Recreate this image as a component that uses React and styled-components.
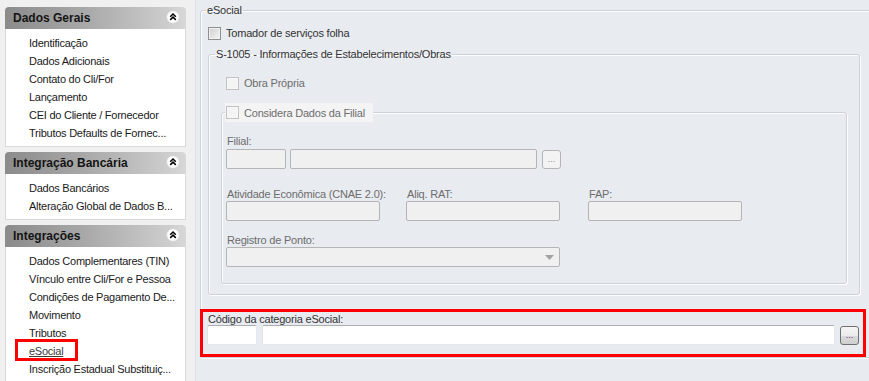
import React from "react";
import styled, { createGlobalStyle, css } from "styled-components";

const Global = createGlobalStyle`
  html, body { margin: 0; padding: 0; width: 869px; height: 381px; overflow: hidden; }
  body { font-family: "Liberation Sans", Arial, sans-serif; font-size: 11px; background: #e8ebf0; }
  #root { width: 869px; height: 381px; }
  *, *::before, *::after { box-sizing: border-box; }
`;

const Page = styled.div`
  display: flex;
  width: 869px;
  height: 381px;
  overflow: hidden;
  background: #e8ebf0;
`;

/* ---------- Sidebar ---------- */
const Sidebar = styled.aside`
  width: 196px;
  flex: none;
  background: #f0f0f0;
  border-right: 1px solid #dde0e5;
  padding: 7px 0 0 5px;
  display: flex;
  flex-direction: column;
  gap: 5px;
`;

const Panel = styled.section`
  width: 181px;
  flex: none;
`;

const PanelHeader = styled.div`
  height: 22px;
  display: flex;
  align-items: center;
  justify-content: space-between;
  padding: 0 6px 1px 8px;
  border-radius: 4px 4px 0 0;
  background: linear-gradient(to right, #8b8b8b 0%, #a9a9a9 45%, #cdcdcd 90%, #d8d8d8 100%);
  font-weight: bold;
  font-size: 12px;
  color: #141414;
  svg { margin-top: -2px; }
`;

const PanelBody = styled.div`
  background: #fff;
  border: 1px solid #d9d9d9;
  border-top: none;
  padding: 5px 0 4px 23px;
`;

const Item = styled.div`
  position: relative;
  height: 18px;
  line-height: 18px;
  color: #1a1a1a;
  white-space: nowrap;
  letter-spacing: -0.25px;
  ${(p) =>
    p.$active &&
    css`
      color: #3a3a3a;
      span { text-decoration: underline; }
      &::after {
        content: "";
        position: absolute;
        left: -14px;
        top: -3px;
        width: 63px;
        height: 22px;
        border: 3px solid #ff0000;
      }
    `}
`;

const Collapse = () => (
  <svg width="14" height="14" viewBox="0 0 14 14">
    <circle cx="7" cy="7" r="6.3" fill="#fff" stroke="#d4d4d4" strokeWidth="0.8" />
    <path
      d="M4.2 6.8 L7 4 L9.8 6.8 M4.2 9.9 L7 7.1 L9.8 9.9"
      stroke="#000"
      strokeWidth="1.5"
      fill="none"
    />
  </svg>
);

const SidePanel = ({ title, items, active }) => (
  <Panel>
    <PanelHeader>
      <span>{title}</span>
      <Collapse />
    </PanelHeader>
    <PanelBody>
      {items.map((it) => (
        <Item key={it} $active={it === active}>
          <span>{it}</span>
        </Item>
      ))}
    </PanelBody>
  </Panel>
);

/* ---------- Content ---------- */
const Content = styled.main`
  flex: 1;
  min-width: 0;
  overflow: hidden;
  padding: 3px 0 0 4px;
  letter-spacing: -0.2px;
`;

const GroupBox = styled.fieldset`
  margin: 0;
  min-width: 0;
  border: 1px solid #cdd2d9;
  border-radius: 3px;
  box-shadow: inset 1px 1px 0 #ffffff, 1px 1px 0 #ffffff;
  width: ${(p) => p.$width}px;
  padding: 0 0 ${(p) => p.$pb || 0}px ${(p) => p.$pl}px;
  margin-top: ${(p) => p.$mt || 0}px;
  margin-left: ${(p) => p.$ml || 0}px;
`;

const Legend = styled.legend`
  padding: 0 1px;
  margin-left: ${(p) => p.$ml}px;
  line-height: 14px;
  color: #333;
  ${(p) =>
    p.$boxed &&
    css`
      background: #f4f4f4;
      padding: 0 8px 0 1px;
      height: 19px;
      display: flex;
      align-items: center;
    `}
`;

const CheckRow = styled.label`
  display: flex;
  align-items: center;
  gap: 5px;
  height: 14px;
  margin-top: ${(p) => p.$mt || 0}px;
  margin-left: ${(p) => p.$ml || 0}px;
  color: ${(p) => (p.$disabled ? "#6d6d6d" : "#333")};
  white-space: nowrap;
`;

const Box = styled.span`
  width: 13px;
  height: 13px;
  flex: none;
  border: 1px solid ${(p) => (p.$disabled ? "#c2c2c2" : "#8e8f8f")};
  background: ${(p) =>
    p.$disabled ? "#f4f4f4" : "linear-gradient(135deg, #cdcdcd 0%, #e6e6e6 60%, #f7f7f7 100%)"};
  box-shadow: inset 0 0 0 1px ${(p) => (p.$disabled ? "#f7f7f7" : "#f1f1f1")};
`;

const Label = styled.div`
  height: ${(p) => p.$h || 14}px;
  line-height: 14px;
  margin-top: ${(p) => p.$mt || 0}px;
  color: ${(p) => (p.$disabled ? "#6d6d6d" : "#333")};
  padding-left: 1px;
  white-space: nowrap;
`;

const Row = styled.div`
  display: flex;
  align-items: center;
  gap: ${(p) => p.$gap || 5}px;
`;

const Input = styled.div`
  height: ${(p) => p.$h || 20}px;
  width: ${(p) => p.$w}px;
  flex: none;
  border-radius: 2px;
  ${(p) =>
    p.$enabled
      ? css`
          background: #fff;
          border: 1px solid;
          border-color: #abadb3 #e3e9ef #e3e9ef #e2e3ea;
        `
      : css`
          background: #f0f0f0;
          border: 1px solid #b4b4b4;
        `}
`;

const EllipsisButton = styled.div`
  width: 19px;
  height: 19px;
  flex: none;
  border-radius: 3px;
  display: flex;
  align-items: flex-end;
  justify-content: center;
  padding-bottom: 4px;
  font-size: 9px;
  line-height: 9px;
  letter-spacing: 0;
  ${(p) =>
    p.$enabled
      ? css`
          border: 1px solid #707070;
          background: linear-gradient(to bottom, #f4f4f4 0%, #ebebeb 50%, #dbdbdb 51%, #cfcfcf 100%);
          color: #5a2d8c;
        `
      : css`
          border: 1px solid #b4b4b4;
          background: #f3f3f3;
          color: #8a8a8a;
        `}
`;

const FieldGrid = styled.div`
  display: grid;
  grid-template-columns: 180px 182px 154px;
  margin-top: ${(p) => p.$mt || 0}px;
`;

const Field = styled.div`
  display: flex;
  flex-direction: column;
`;

const Select = styled.div`
  height: 20px;
  width: 334px;
  background: #f0f0f0;
  border: 1px solid #b4b4b4;
  border-radius: 2px;
  display: flex;
  align-items: center;
  justify-content: flex-end;
  padding-right: 5px;
`;

const Highlight = styled.div`
  width: 666px;
  margin: 14px 0 0 -8px;
  border: 3px solid #ff0000;
  padding: 0 4px 9px 4px;
`;

const ArrowDown = () => (
  <svg width="9" height="5" viewBox="0 0 9 5">
    <path d="M0 0 H9 L4.5 5 Z" fill="#a3a3a3" />
  </svg>
);

export default function App() {
  return (
    <>
      <Global />
      <Page>
        <Sidebar>
          <SidePanel
            title="Dados Gerais"
            items={[
              "Identificação",
              "Dados Adicionais",
              "Contato do Cli/For",
              "Lançamento",
              "CEI do Cliente / Fornecedor",
              "Tributos Defaults de Fornec...",
            ]}
          />
          <SidePanel
            title="Integração Bancária"
            items={["Dados Bancários", "Alteração Global de Dados B..."]}
          />
          <SidePanel
            title="Integrações"
            active="eSocial"
            items={[
              "Dados Complementares (TIN)",
              "Vínculo entre Cli/For e Pessoa",
              "Condições de Pagamento De...",
              "Movimento",
              "Tributos",
              "eSocial",
              "Inscrição Estadual Substituiç...",
            ]}
          />
        </Sidebar>

        <Content>
          <GroupBox $width={700} $pl={7}>
            <Legend $ml={-2}>eSocial</Legend>
            <CheckRow $mt={9}>
              <Box />
              Tomador de serviços folha
            </CheckRow>

            <GroupBox $width={652} $pl={12} $pb={10} $mt={7}>
              <Legend $ml={-6}>S-1005 - Informações de Estabelecimentos/Obras</Legend>
              <CheckRow $mt={15} $ml={5} $disabled>
                <Box $disabled />
                Obra Própria
              </CheckRow>

              <GroupBox $width={626} $pl={4} $pb={16} $mt={13}>
                <Legend $ml={-1} $boxed>
                  <CheckRow $disabled>
                    <Box $disabled />
                    Considera Dados da Filial
                  </CheckRow>
                </Legend>

                <Label $mt={12} $h={15} $disabled>
                  Filial:
                </Label>
                <Row $gap={4}>
                  <Input $w={60} />
                  <Input $w={247} />
                  <EllipsisButton style={{ marginLeft: 1 }}>...</EllipsisButton>
                </Row>

                <FieldGrid $mt={18}>
                  <Field>
                    <Label $disabled>Atividade Econômica (CNAE 2.0):</Label>
                    <Input $w={154} />
                  </Field>
                  <Field>
                    <Label $disabled>Aliq. RAT:</Label>
                    <Input $w={154} />
                  </Field>
                  <Field>
                    <Label $disabled>FAP:</Label>
                    <Input $w={154} />
                  </Field>
                </FieldGrid>

                <Label $mt={12} $disabled>
                  Registro de Ponto:
                </Label>
                <Select>
                  <ArrowDown />
                </Select>
              </GroupBox>
            </GroupBox>

            <Highlight>
              <Label $h={13}>Código da categoria eSocial:</Label>
              <Row>
                <Input $w={50} $enabled />
                <Input $w={573} $enabled />
                <EllipsisButton $enabled>...</EllipsisButton>
              </Row>
            </Highlight>
          </GroupBox>
        </Content>
      </Page>
    </>
  );
}
